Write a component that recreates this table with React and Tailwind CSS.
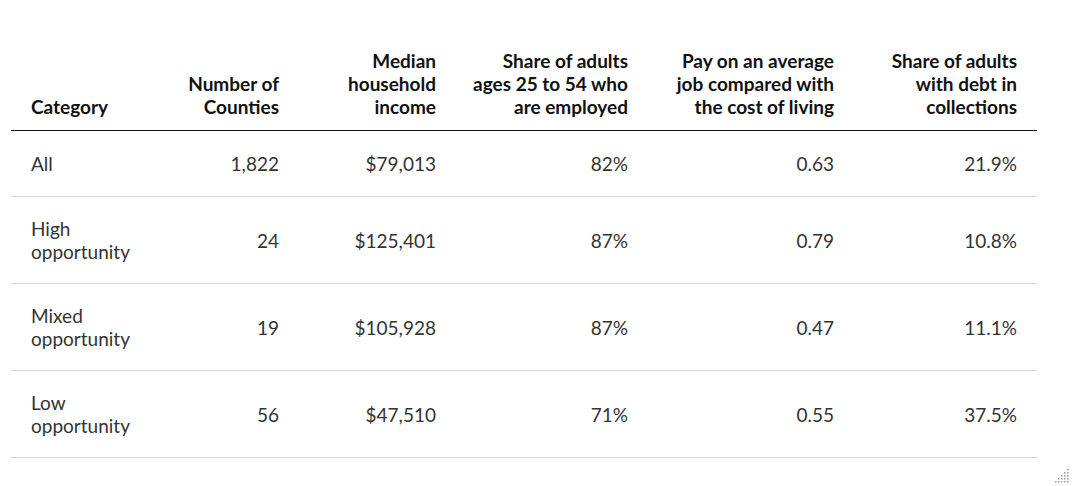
import React from 'react';

const rows = [
  { category: ['All'], counties: '1,822', income: '$79,013', employed: '82%', pay: '0.63', debt: '21.9%' },
  { category: ['High', 'opportunity'], counties: '24', income: '$125,401', employed: '87%', pay: '0.79', debt: '10.8%' },
  { category: ['Mixed', 'opportunity'], counties: '19', income: '$105,928', employed: '87%', pay: '0.47', debt: '11.1%' },
  { category: ['Low', 'opportunity'], counties: '56', income: '$47,510', employed: '71%', pay: '0.55', debt: '37.5%' },
];

const headers = [
  { label: ['Category'], align: 'text-left pl-5', w: 'w-[160px]' },
  { label: ['Number of', 'Counties'], align: 'text-right pr-5', w: 'w-[128px]' },
  { label: ['Median', 'household', 'income'], align: 'text-right pr-5', w: 'w-[157px]' },
  { label: ['Share of adults', 'ages 25 to 54 who', 'are employed'], align: 'text-right pr-5', w: 'w-[192px]' },
  { label: ['Pay on an average', 'job compared with', 'the cost of living'], align: 'text-right pr-5', w: 'w-[206px]' },
  { label: ['Share of adults', 'with debt in', 'collections'], align: 'text-right pr-5', w: 'w-[183px]' },
];

const ResizeGrip = () => (
  <svg width="14" height="14" viewBox="0 0 14 14" className="absolute right-[4px] bottom-[3px]">
    {[0, 1, 2, 3, 4].map((r) =>
      [0, 1, 2, 3, 4].filter((c) => c + r >= 4).map((c) => (
        <rect key={`${r}-${c}`} x={c * 3} y={r * 3} width="1.5" height="1.5" fill="#9a9a9a" />
      ))
    )}
  </svg>
);

const App = () => {
  return (
    <div
      className="relative w-[1073px] h-[486px] bg-white overflow-hidden"
      style={{ fontFamily: 'Lato, "Open Sans", sans-serif' }}
    >
      <div className="pt-[49px] pl-[11px]">
        <table className="w-[1026px] border-collapse table-fixed">
          <thead>
            <tr className="border-b border-[#111]">
              {headers.map((h, i) => (
                <th
                  key={i}
                  className={`${h.w} ${h.align} align-bottom pb-[12px] text-[19px] leading-[23px] font-bold text-[#111] whitespace-nowrap`}
                >
                  {h.label.map((l, j) => (
                    <div key={j}>{l}</div>
                  ))}
                </th>
              ))}
            </tr>
          </thead>
          <tbody>
            {rows.map((r, i) => (
              <tr key={i} className="border-b border-[#d6d6d6] text-[19px] leading-[23px] font-normal text-[#333]">
                <td className={`pl-5 align-middle ${i === 0 ? 'py-[21px]' : 'py-[20px]'}`}>
                  {r.category.map((c, j) => (
                    <div key={j}>{c}</div>
                  ))}
                </td>
                <td className="pr-5 text-right align-middle">{r.counties}</td>
                <td className="pr-5 text-right align-middle">{r.income}</td>
                <td className="pr-5 text-right align-middle">{r.employed}</td>
                <td className="pr-5 text-right align-middle">{r.pay}</td>
                <td className="pr-5 text-right align-middle">{r.debt}</td>
              </tr>
            ))}
          </tbody>
        </table>
      </div>
      <ResizeGrip />
    </div>
  );
};

export default App;
